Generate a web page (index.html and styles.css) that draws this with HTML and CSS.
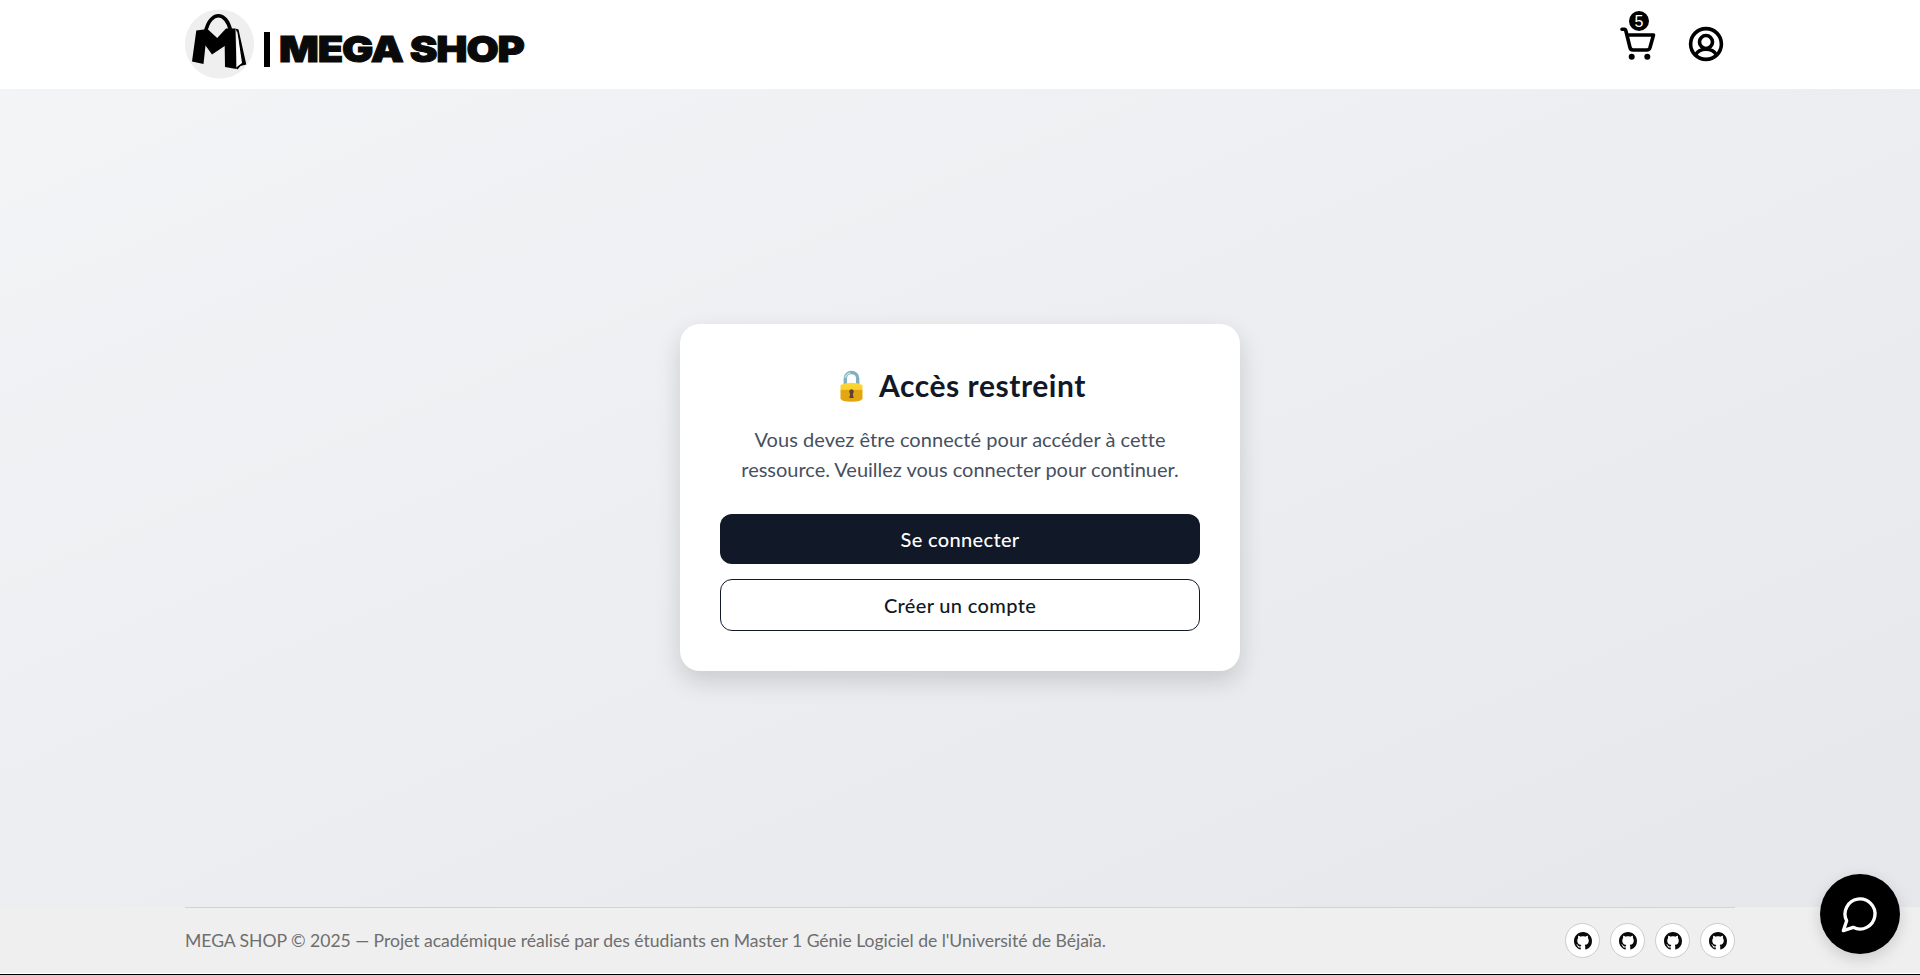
FILE: index.html
```html
<!DOCTYPE html>
<html lang="fr">
<head>
<meta charset="utf-8">
<title>Mega Shop</title>
<link rel="stylesheet" href="styles.css">
</head>
<body>
<header class="header">
  <div class="container header-inner">
    <a class="brand">
      <svg class="brand-logo" viewBox="0 0 70 70">
        <circle cx="34.5" cy="35" r="34.6" fill="#efefef"/>
        <path d="M20.5 23C23 11 29 6.7 33.300 6.700C38.500 6.700 43.500 12 45.500 21.500" fill="none" stroke="#000" stroke-width="3.600"/>
        <path d="M11.300 21.500L22.500 20L32.200 29L41 19.500L50.500 19.500L51.500 60L40 58L39.700 37L27 45.500L20.500 36.500L18.500 55L7 52.500Z"/>
        <path d="M50.500 19.500L53.500 20.500L61.300 55.500L55.500 57L52.500 60.500L51 59L56 53L52.300 24Z"/>
        <path d="M52.300 22L57 54L51.700 58Z" fill="#fff"/>
      </svg>
      <span class="brand-bar"></span>
      <span class="brand-name">MEGA SHOP</span>
    </a>
    <nav class="actions">
      <a class="cart">
        <svg width="36" height="34" viewBox="0 0 36 34" fill="none" stroke="#000" stroke-width="3.600" stroke-linecap="round" stroke-linejoin="round">
          <path d="M2 2.300H4.500Q5.500 2.300 5.900 4L10 20.500Q10.600 23 13 23H27Q29.200 23 30 20.500L33.500 8H7"/>
          <circle cx="11.700" cy="29.700" r="3" fill="#000" stroke="none"/><circle cx="27.300" cy="29.700" r="3" fill="#000" stroke="none"/>
        </svg>
        <span class="badge">5</span>
      </a>
      <svg width="36" height="36" viewBox="0 0 36 36" fill="none" stroke="#000" stroke-width="3.600">
        <circle cx="18" cy="18" r="15.400"/><circle cx="18" cy="16" r="6.500"/>
        <path d="M7.500 29C9.500 24.800 13.500 23.200 18 23.200S26.500 24.800 28.500 29"/>
      </svg>
    </nav>
  </div>
</header>
<main class="main">
  <section class="card">
    <h1 class="title">
      <svg class="lock" width="23" height="32" viewBox="0 0 23 32">
        <defs><linearGradient id="g" x2="0" y2="1"><stop stop-color="#fdd835"/><stop offset=".35" stop-color="#f9cf2d"/><stop offset=".4" stop-color="#e2a610"/></linearGradient></defs>
        <path d="M5.300 16V8.500C5.300 .5 17.700 .5 17.700 8.500V16" fill="none" stroke="#82aec0" stroke-width="3.400"/>
        <path d="M5.300 8C6 4.500 8.500 3.200 10.500 3" fill="none" stroke="#b9e4ea" stroke-width="1.500"/>
        <path d="M.5 15Q11.500 10.500 22.500 15V28.500Q21.500 31.800 11.500 31.800Q1.500 31.800 .5 28.500Z" fill="url(#g)"/>
        <path d="M9.200 21.500a2.300 2.300 0 1 1 4.100 1.500L12.800 24.300L13.700 28H9.300L10.200 24.300Z" fill="#5d4037"/>
      </svg>
      <span class="title-text">Accès restreint</span>
    </h1>
    <p class="message"><span class="line-a">Vous devez être connecté pour accéder à cette</span><br><span class="line-b">ressource. Veuillez vous connecter pour continuer.</span></p>
    <a class="button primary">Se connecter</a>
    <a class="button secondary">Créer un compte</a>
  </section>
</main>
<footer class="footer">
  <div class="container footer-inner">
    <p class="copyright">MEGA SHOP © 2025 — Projet académique réalisé par des étudiants en Master 1 Génie Logiciel de l'Université de Béjaïa.</p>
    <div class="socials">
      <svg width="0" height="0" class="defs"><symbol id="gh" viewBox="0 0 16 16"><path d="M8 0C3.580 0 0 3.580 0 8c0 3.540 2.290 6.530 5.470 7.590.4.070.55-.17.55-.38 0-.19-.01-.82-.01-1.490-2.010.37-2.530-.49-2.690-.94-.09-.23-.48-.94-.82-1.130-.28-.15-.68-.52-.01-.53.63-.01 1.080.58 1.230.82.72 1.210 1.870.87 2.330.66.07-.52.28-.87.51-1.070-1.780-.2-3.640-.89-3.640-3.950 0-.87.31-1.590.82-2.150-.08-.2-.36-1.020.08-2.120 0 0 .67-.21 2.200.82.64-.18 1.320-.27 2-.27s1.360.09 2 .27c1.530-1.040 2.200-.82 2.200-.82.44 1.100.16 1.920.08 2.120.51.56.82 1.270.82 2.150 0 3.070-1.870 3.750-3.650 3.950.29.25.54.73.54 1.480 0 1.070-.01 1.930-.01 2.200 0 .21.15.46.55.38A8.010 8.010 0 0 0 16 8c0-4.420-3.580-8-8-8"/></symbol></svg>
      <a class="social"><svg width="18" height="18"><use href="#gh"/></svg></a>
      <a class="social"><svg width="18" height="18"><use href="#gh"/></svg></a>
      <a class="social"><svg width="18" height="18"><use href="#gh"/></svg></a>
      <a class="social"><svg width="18" height="18"><use href="#gh"/></svg></a>
    </div>
  </div>
</footer>
<div class="edge"></div>
<button class="chat"><svg width="40" height="40" viewBox="0 0 24 24" fill="none" stroke="#fff" stroke-width="2" stroke-linecap="round" stroke-linejoin="round"><path d="M7.900 20A9 9 0 1 0 4 16.100L2 22Z"/></svg></button>
</body>
</html>
```
FILE: styles.css
```css
* { box-sizing: border-box; }
body { margin: 0; height: 975px; overflow: hidden; display: flex; flex-direction: column; font-family: Lato, "Liberation Sans", sans-serif; background: #fff; }
.container { width: 1550px; margin: 0 auto; display: flex; align-items: center; justify-content: space-between; }
.header { height: 89px; background: #fff; }
.header-inner { height: 88px; padding-right: 11px; }
.brand { display: flex; align-items: center; }
.brand-logo { width: 70px; height: 70px; }
.brand-bar { width: 6px; height: 35px; margin: 10px 9px 0 9px; background: #000; }
.brand-name { font: 900 36px/44px Inter, sans-serif; color: #0a0a0a; margin-top: 10px; letter-spacing: -1px; -webkit-text-stroke: 1px #0a0a0a; transform: scaleX(1.157); transform-origin: left; white-space: nowrap; }
.actions { display: flex; align-items: center; gap: 32px; }
.cart { position: relative; display: flex; }
.badge { position: absolute; left: 9px; top: -16px; width: 20px; height: 20px; border-radius: 50%; background: #000; color: #fff; font: 16px/22px "Liberation Sans", sans-serif; text-align: center; }
.main { height: 818px; padding-bottom: 1px; background: linear-gradient(to bottom right, #f3f4f6, #e5e7eb); display: flex; align-items: center; justify-content: center; }
.card { width: 560px; height: 347px; padding: 39px 40px 40px; border-radius: 20px; background: #fff; box-shadow: 0 10px 25px rgba(0, 0, 0, .15); text-align: center; }
.title { display: flex; align-items: center; justify-content: center; gap: 16px; margin: 0 0 16px; height: 45px; font-size: 30px; line-height: 45px; font-weight: 700; color: #111827; padding-left: 6px; }
.title-text { letter-spacing: .55px; }
.lock { display: block; }
.message { margin: 0 0 30px; font-size: 20px; line-height: 30px; color: #465060; white-space: nowrap; }
.line-a { letter-spacing: .04px; }
.line-b { letter-spacing: -.01px; }
.button { display: block; height: 50px; border-radius: 12px; font-size: 20px; line-height: 50px; font-weight: 500; letter-spacing: .35px; }
.primary { background: #111827; color: #fff; margin-bottom: 15px; }
.secondary { height: 52px; border: 1px solid #111827; color: #111827; }
.footer { height: 66px; background: #efefef; }
.footer-inner { height: 66px; border-top: 1px solid #d1d3d6; }
.copyright { margin: 0; font-size: 17.600px; line-height: 26px; color: #6e6e6e; white-space: nowrap; letter-spacing: -.04px; }
.socials { display: flex; gap: 10px; }
.defs { position: absolute; }
.social { width: 35px; height: 35px; border: 1px solid #ccc; border-radius: 50%; background: #fff; color: #0a0a0a; fill: #0a0a0a; display: flex; align-items: center; justify-content: center; }
.edge { height: 2px; border-bottom: 1px solid #000; }
.chat { position: fixed; right: 20px; bottom: 21px; width: 80px; height: 80px; border: 0; border-radius: 50%; padding: 0; background: #000; display: flex; align-items: center; justify-content: center; box-shadow: 0 5px 15px rgba(0, 0, 0, .15); }
```
